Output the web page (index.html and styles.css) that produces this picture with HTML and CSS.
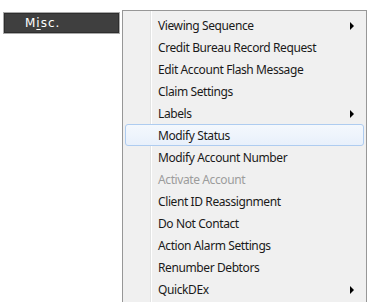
FILE: index.html
```html
<!DOCTYPE html>
<html lang="en">
<head>
    <meta charset="UTF-8">
    <title>Misc. menu</title>
    <link rel="stylesheet" href="styles.css">
</head>
<body>
    <div class="toolbar">
        <div class="menu-button">M<u>i</u>sc.</div>

        <ul class="dropdown">
            <li class="item has-sub">Viewing Sequence</li>
            <li class="item">Credit Bureau Record Request</li>
            <li class="item">Edit Account Flash Message</li>
            <li class="item">Claim Settings</li>
            <li class="item has-sub">Labels</li>
            <li class="item hover">Modify Status</li>
            <li class="item">Modify Account Number</li>
            <li class="item disabled">Activate Account</li>
            <li class="item">Client ID Reassignment</li>
            <li class="item">Do Not Contact</li>
            <li class="item">Action Alarm Settings</li>
            <li class="item">Renumber Debtors</li>
            <li class="item has-sub">QuickDEx</li>
        </ul>
    </div>
</body>
</html>
```

FILE: styles.css
```css
body {
    margin: 0;
    background-color: #fff;
    font-family: "Segoe UI", "Noto Sans", Arial, sans-serif;
}

.toolbar {
    position: relative;
    padding: 12px 0 0 3px;
    height: 302px;
    box-sizing: border-box;
}

.menu-button {
    width: 117px;
    height: 22px;
    box-sizing: border-box;
    border: 1px solid #a9a9a9;
    background-color: #3f3f3f;
    box-shadow: inset 0 0 0 1px #2e2e2e;
    color: #fff;
    font-family: "DejaVu Sans", Verdana, sans-serif;
    font-size: 12px;
    letter-spacing: 1px;
    line-height: 20px;
    padding-left: 21px;
}

.menu-button u {
    text-decoration-thickness: 1px;
    text-underline-offset: 2px;
}

/* popup menu, sits over the page */
.dropdown {
    position: absolute;
    left: 122px;
    top: 10px;
    width: 245px;
    margin: 0;
    padding: 2px;
    list-style: none;
    box-sizing: border-box;
    border: 1px solid #979797;
    background-color: #f0f0f0;
    background-image: linear-gradient(to right,
        transparent 27px, #e2e3e3 27px, #e2e3e3 28px, #fff 28px, #fff 29px, transparent 29px);
}

.item {
    position: relative;
    height: 22px;
    line-height: 22px;
    padding-left: 32px;
    font-size: 12px;
    letter-spacing: -0.4px;
    color: #1a1a1a;
    border: 1px solid transparent;
    border-radius: 3px;
    box-sizing: border-box;
}

.item:first-child {
    margin-top: 1px;
}

.item.has-sub::after {
    content: "";
    position: absolute;
    right: 9px;
    top: 7px;
    border-left: 4px solid #000;
    border-top: 4px solid transparent;
    border-bottom: 4px solid transparent;
}

.item.hover {
    border-color: #aeccf0;
    background: linear-gradient(to bottom, #f4f8fd, #e8f0fb);
}

.item.disabled {
    color: #9c9c9c;
}
```
